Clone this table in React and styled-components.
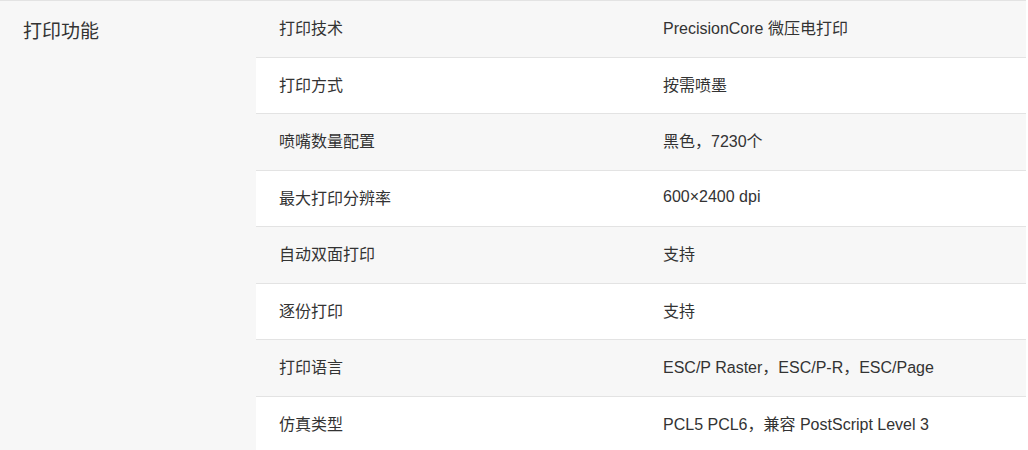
import styled, { createGlobalStyle } from "styled-components";

const GlobalStyle = createGlobalStyle`
  body {
    margin: 0;
    background: #ffffff;
    font-family: "Liberation Sans", "Noto Sans CJK SC", sans-serif;
    color: #333333;
  }
`;

const Section = styled.div`
  width: 1026px;
  display: flex;
  border-top: 1px solid #e3e3e3;
`;

const Side = styled.div`
  width: 256px;
  flex-shrink: 0;
  background-color: #f7f7f7;
  padding: 19px 0 0 23px;
  box-sizing: border-box;
  font-size: 19px;
  line-height: 24px;
  color: #333;
`;

const Table = styled.div`
  flex: 1;
  display: flex;
  flex-direction: column;
`;

const Row = styled.div`
  height: 56.5px;
  box-sizing: border-box;
  display: grid;
  grid-template-columns: 384px 1fr;
  align-items: center;
  background-color: ${(props) => (props.$shade ? "#f7f7f7" : "#ffffff")};
  border-bottom: 1px solid #e3e3e3;
  font-size: 16px;
  color: #333;
`;

const Cell = styled.div`
  padding-left: 23px;
  padding-bottom: 3px;
`;

const specs = [
  ["打印技术", "PrecisionCore 微压电打印"],
  ["打印方式", "按需喷墨"],
  ["喷嘴数量配置", "黑色，7230个"],
  ["最大打印分辨率", "600×2400 dpi"],
  ["自动双面打印", "支持"],
  ["逐份打印", "支持"],
  ["打印语言", "ESC/P Raster，ESC/P-R，ESC/Page"],
  ["仿真类型", "PCL5 PCL6，兼容 PostScript Level 3"],
];

const App = () => {
  return (
    <>
      <GlobalStyle />
      <Section>
        <Side>打印功能</Side>
        <Table>
          {specs.map(([name, value], i) => (
            <Row key={name} $shade={i % 2 === 0}>
              <Cell>{name}</Cell>
              <Cell>{value}</Cell>
            </Row>
          ))}
        </Table>
      </Section>
    </>
  );
};

export default App;
